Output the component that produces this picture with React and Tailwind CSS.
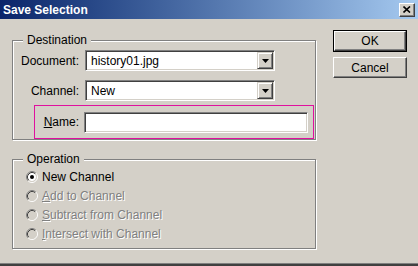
import React from "react";

function Radio({ checked, disabled }) {
  return (
    <svg width="12" height="12" viewBox="0 0 12 12" className="shrink-0">
      <circle cx="6" cy="6" r="4" fill={disabled ? "#d4d0c8" : "#ffffff"} />
      <path d="M2.11 9.89 A5.5 5.5 0 0 1 9.89 2.11" fill="none" stroke="#808080" />
      <path d="M9.89 2.11 A5.5 5.5 0 0 1 2.11 9.89" fill="none" stroke="#ffffff" />
      <path d="M2.82 9.18 A4.5 4.5 0 0 1 9.18 2.82" fill="none" stroke="#404040" />
      <path d="M9.18 2.82 A4.5 4.5 0 0 1 2.82 9.18" fill="none" stroke="#d4d0c8" />
      {checked && <circle cx="6" cy="6" r="2" fill="#000000" />}
    </svg>
  );
}

function DropButton() {
  return (
    <div className="my-[1px] mr-[1px] flex h-[17px] w-[16px] shrink-0 items-center justify-center border border-t-[#d4d0c8] border-l-[#d4d0c8] border-r-[#404040] border-b-[#404040] bg-[#d4d0c8] shadow-[inset_1px_1px_0_#fff,inset_-1px_-1px_0_#808080]">
      <svg width="7" height="4" viewBox="0 0 7 4">
        <path d="M0 0h7L3.5 4z" fill="#000" />
      </svg>
    </div>
  );
}

function Select({ value }) {
  return (
    <div className="flex h-[21px] w-[190px] border border-t-[#808080] border-l-[#808080] border-r-white border-b-white bg-white shadow-[inset_1px_1px_0_#404040,inset_-1px_-1px_0_#d4d0c8]">
      <div className="flex flex-1 items-center pl-[5px]">{value}</div>
      <DropButton />
    </div>
  );
}

function Field({ label, children }) {
  return (
    <div className="flex items-center">
      <div className="w-[67px] pr-[1px] text-right">{label}</div>
      <div className="ml-[5px]">{children}</div>
    </div>
  );
}

const groupBox =
  "w-[304px] border border-[#808080] shadow-[1px_1px_0_#fff,inset_1px_1px_0_#fff]";

const disabledText = "text-[#808080] [text-shadow:1px_1px_0_#fff]";

function Button({ children, isDefault }) {
  const face = (
    <div className="flex h-full w-full items-center justify-center border border-t-white border-l-white border-r-[#404040] border-b-[#404040] bg-[#d4d0c8] shadow-[inset_-1px_-1px_0_#808080]">
      {children}
    </div>
  );
  if (isDefault) {
    return <div className="h-[22px] w-[74px] border border-black">{face}</div>;
  }
  return <div className="h-[21px] w-[74px]">{face}</div>;
}

export default function App() {
  return (
    <div className="flex h-[266px] w-[418px] flex-col overflow-hidden bg-[#d4d0c8] font-['Liberation_Sans',Arial,sans-serif] text-[12px] text-black">
      <div className="flex h-[19px] shrink-0 items-center justify-between bg-linear-to-r from-[#0a246a] to-[#a6caf0] pl-[3px] pr-[3px]">
        <span className="text-[12px] font-bold text-white">Save Selection</span>
        <div className="flex h-[14px] w-[16px] items-center justify-center border border-t-white border-l-white border-r-[#404040] border-b-[#404040] bg-[#d4d0c8] shadow-[inset_-1px_-1px_0_#808080]">
          <svg width="8" height="7" viewBox="0 0 8 7">
            <path d="M0.5 0.5L7 6.5M7 0.5L0.5 6.5" stroke="#000" strokeWidth="1.6" />
          </svg>
        </div>
      </div>

      <div className="flex flex-1">
        <div className="pl-[12px]">
          <fieldset className={`mt-[14px] ${groupBox}`}>
            <legend className="ml-[10px] bg-[#d4d0c8] px-[4px] leading-[14px]">Destination</legend>
            <div className="mt-[3px] flex flex-col">
              <Field label="Document:">
                <Select value="history01.jpg" />
              </Field>
              <div className="mt-[9px]">
                <Field label="Channel:">
                  <Select value="New" />
                </Field>
              </div>
              <div className="mt-[4px] ml-[21px] flex h-[34px] w-[280px] items-center border border-[#e0109f]">
                <div className="w-[45px] pr-[1px] text-right">
                  <u>N</u>ame:
                </div>
                <div className="ml-[4px] h-[21px] w-[224px] border border-t-[#808080] border-l-[#808080] border-r-white border-b-white bg-white shadow-[inset_1px_1px_0_#404040,inset_-1px_-1px_0_#d4d0c8]" />
              </div>
            </div>
          </fieldset>

          <fieldset className={`mt-[12px] ${groupBox}`}>
            <legend className="ml-[10px] bg-[#d4d0c8] px-[4px] leading-[14px]">Operation</legend>
            <div className="flex flex-col pb-[5px] pl-[13px] pt-[1px]">
              <div className="flex h-[19px] items-center gap-[4px]">
                <Radio checked />
                <span>New Channel</span>
              </div>
              <div className="flex h-[19px] items-center gap-[4px]">
                <Radio disabled />
                <span className={disabledText}>
                  <u>A</u>dd to Channel
                </span>
              </div>
              <div className="flex h-[19px] items-center gap-[4px]">
                <Radio disabled />
                <span className={disabledText}>
                  <u>S</u>ubtract from Channel
                </span>
              </div>
              <div className="flex h-[19px] items-center gap-[4px]">
                <Radio disabled />
                <span className={disabledText}>
                  <u>I</u>ntersect with Channel
                </span>
              </div>
            </div>
          </fieldset>
        </div>

        <div className="ml-[17px] flex flex-col gap-[5px] pt-[11px]">
          <Button isDefault>OK</Button>
          <Button>Cancel</Button>
        </div>
      </div>

      <div className="h-[3px] shrink-0 border-t border-[#808080] bg-[#404040]" />
    </div>
  );
}
